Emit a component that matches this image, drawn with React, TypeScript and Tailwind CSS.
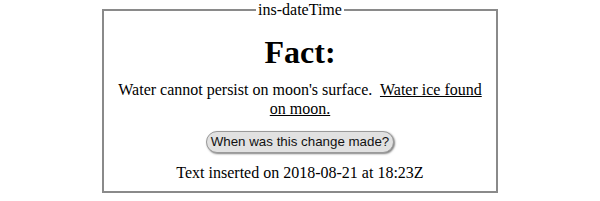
import React, { useState } from "react";

export default function App() {
  const [shown, setShown] = useState(true);

  return (
    <div className="w-[600px] h-[201px] bg-white font-['Liberation_Serif',serif] text-black">
      <fieldset className="w-[396px] mx-auto border-2 border-[#8a8a8a] px-3 pb-[9px] text-center">
        <legend className="mx-auto px-[2px] text-[16px] leading-[19px]">ins-dateTime</legend>

        {/* Heading */}
        <h1 className="mt-[15px] text-[32px] font-bold leading-[37px]">Fact:</h1>

        <p className="mt-[9px] text-[16px] leading-[19px]">
          Water cannot persist on moon's surface.&nbsp;{" "}
          <ins className="underline">Water ice found on moon.</ins>
        </p>

        <button
          type="button"
          onClick={() => setShown((s) => !s)}
          className="mt-[13px] px-[4px] h-[22px] rounded-full bg-[#e1e1e1] border border-[#9a9a9a] shadow-[1px_1px_2px_rgba(0,0,0,0.5)] font-['Liberation_Sans',sans-serif] text-[13.333px] leading-[20px] text-[#111]"
        >
          When was this change made?
        </button>

        <p className="mt-[10px] text-[16px] leading-[19px]">
          {shown ? "Text inserted on 2018-08-21 at 18:23Z" : "\u00a0"}
        </p>
      </fieldset>
    </div>
  );
}
